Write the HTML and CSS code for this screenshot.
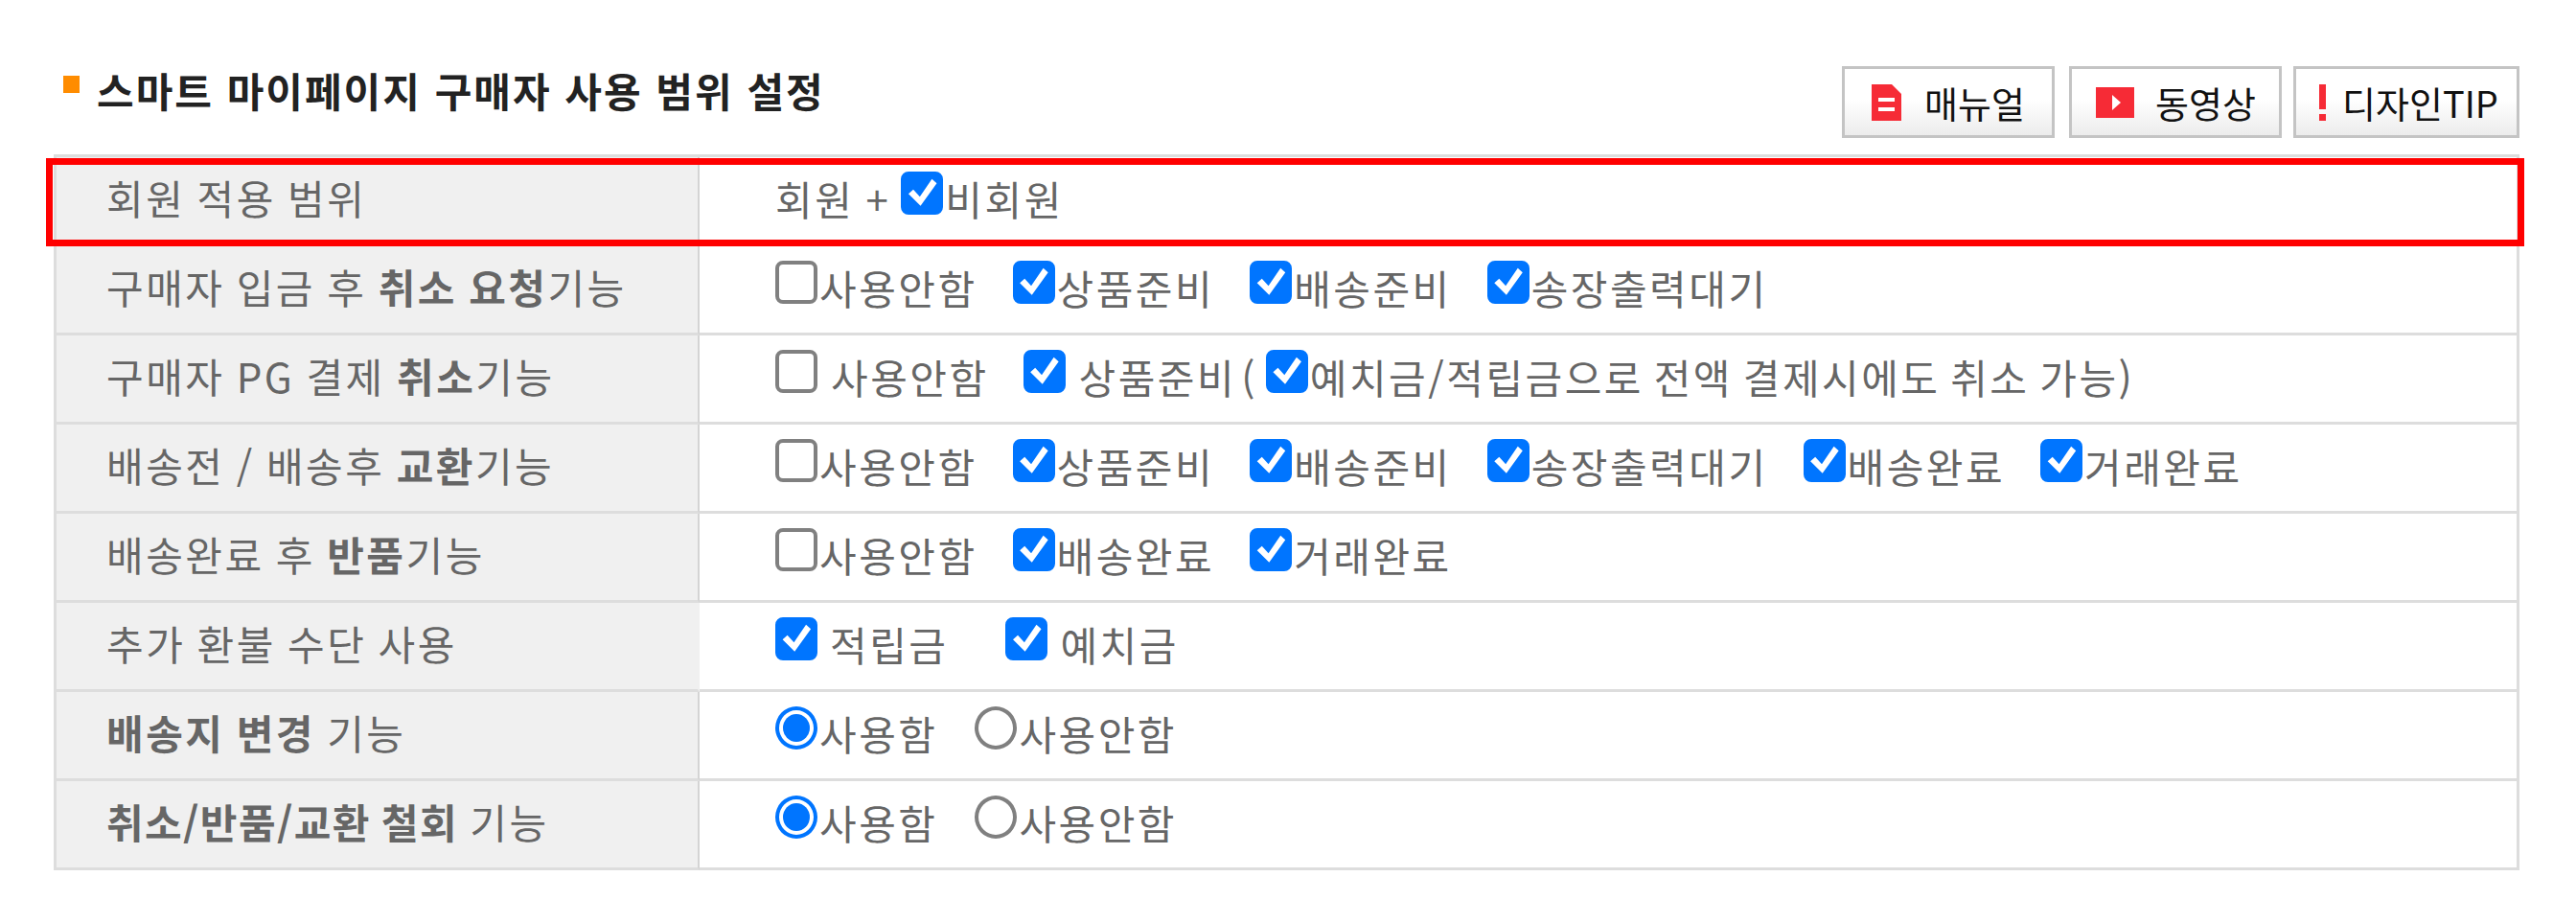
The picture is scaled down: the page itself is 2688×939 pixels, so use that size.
FILE: index.html
```html
<!DOCTYPE html>
<html lang="ko">
<head>
<meta charset="utf-8">
<title>스마트 마이페이지 구매자 사용 범위 설정</title>
<link rel="stylesheet" href="styles.css">
</head>
<body>
<header class="head">
  <h2 class="title"><span class="bullet"></span>스마트 마이페이지 구매자 사용 범위 설정</h2>
  <div class="btns">
    <a class="btn btn-manual"><svg class="ic" width="31" height="38" viewBox="0 0 31 38"><path d="M0 0H21L31 10V38H0Z" fill="#f62b36"/><rect x="7" y="14" width="17" height="4" fill="#fff"/><rect x="7" y="24" width="17" height="4" fill="#fff"/></svg>매뉴얼</a>
    <a class="btn btn-video"><svg class="ic" width="40" height="32" viewBox="0 0 40 32"><rect width="40" height="32" fill="#f62b36"/><path d="M17 8L26 16L17 24Z" fill="#fff"/></svg>동영상</a>
    <a class="btn btn-tip"><svg class="ic" width="7" height="38" viewBox="0 0 7 38"><rect width="7" height="26" fill="#f62b36"/><rect y="31" width="7" height="7" fill="#f62b36"/></svg>디자인TIP</a>
  </div>
</header>
<div class="wrap">
  <table class="tbl">
    <tbody>
      <tr>
        <th>회원 적용 범위</th>
        <td><div class="opts tight"><span class="txt plus">회원 +</span><label class="opt"><input type="checkbox" checked><span>비회원</span></label></div></td>
      </tr>
      <tr>
        <th>구매자 입금 후 <b>취소 요청</b>기능</th>
        <td><div class="opts"><label class="opt"><input type="checkbox"><span>사용안함</span></label><label class="opt"><input type="checkbox" checked><span>상품준비</span></label><label class="opt"><input type="checkbox" checked><span>배송준비</span></label><label class="opt"><input type="checkbox" checked><span>송장출력대기</span></label></div></td>
      </tr>
      <tr>
        <th>구매자 PG 결제 <b>취소</b>기능</th>
        <td><div class="opts wide"><label class="opt"><input type="checkbox"><span>사용안함</span></label><label class="opt"><input type="checkbox" checked><span>상품준비</span></label><span class="txt paren">(</span><label class="opt narrow"><input type="checkbox" checked><span>예치금/적립금으로 전액 결제시에도 취소 가능)</span></label></div></td>
      </tr>
      <tr>
        <th>배송전 / 배송후 <b>교환</b>기능</th>
        <td><div class="opts"><label class="opt"><input type="checkbox"><span>사용안함</span></label><label class="opt"><input type="checkbox" checked><span>상품준비</span></label><label class="opt"><input type="checkbox" checked><span>배송준비</span></label><label class="opt"><input type="checkbox" checked><span>송장출력대기</span></label><label class="opt"><input type="checkbox" checked><span>배송완료</span></label><label class="opt"><input type="checkbox" checked><span>거래완료</span></label></div></td>
      </tr>
      <tr>
        <th>배송완료 후 <b>반품</b>기능</th>
        <td><div class="opts"><label class="opt"><input type="checkbox"><span>사용안함</span></label><label class="opt"><input type="checkbox" checked><span>배송완료</span></label><label class="opt"><input type="checkbox" checked><span>거래완료</span></label></div></td>
      </tr>
      <tr>
        <th class="nodiv">추가 환불 수단 사용</th>
        <td><div class="opts refund"><label class="opt"><input type="checkbox" checked><span>적립금</span></label><label class="opt"><input type="checkbox" checked><span>예치금</span></label></div></td>
      </tr>
      <tr>
        <th><b>배송지 변경</b> 기능</th>
        <td><div class="opts radios"><label class="opt"><input type="radio" name="r1" checked><span>사용함</span></label><label class="opt"><input type="radio" name="r1"><span>사용안함</span></label></div></td>
      </tr>
      <tr>
        <th><b class="slashed">취소/반품/교환 철회</b> 기능</th>
        <td><div class="opts radios"><label class="opt"><input type="radio" name="r2" checked><span>사용함</span></label><label class="opt"><input type="radio" name="r2"><span>사용안함</span></label></div></td>
      </tr>
    </tbody>
  </table>
  <div class="highlight"></div>
</div>
</body>
</html>
```
FILE: styles.css
```css
* { box-sizing: border-box; }
html, body { margin: 0; padding: 0; background: #fff; }
body {
  width: 2688px;
  height: 939px;
  overflow: hidden;
  font-family: "Noto Sans CJK KR", "Noto Sans", sans-serif;
  color: #666;
}
.head {
  height: 161px;
  padding: 69px 59px 0 66px;
  display: flex;
  justify-content: space-between;
  align-items: flex-start;
}
.title {
  margin: 0;
  display: flex;
  align-items: flex-start;
  font-size: 42px;
  line-height: 50px;
  font-weight: 700;
  letter-spacing: 2px;
  color: #222;
  white-space: nowrap;
}
.bullet {
  width: 17px;
  height: 18px;
  margin: 10px 18px 0 0;
  background: #ff8c00;
}
.btns { display: flex; }
.btn {
  height: 75px;
  display: flex;
  align-items: center;
  border: 3px solid #c4c4c4;
  background: linear-gradient(#fff 45%, #ececec);
  color: #111;
  font-size: 38px;
  white-space: nowrap;
}
.btn-manual { width: 222px; padding-left: 28px; }
.btn-manual .ic { margin-right: 24px; }
.btn-video { width: 222px; margin-left: 15px; padding-left: 25px; }
.btn-video .ic { margin-right: 22px; }
.btn-tip { width: 236px; margin-left: 12px; padding-left: 24px; }
.btn-tip .ic { margin-right: 17px; }
.wrap { position: relative; margin: 0 59px 0 56px; }
.tbl {
  width: 100%;
  table-layout: fixed;
  border-collapse: separate;
  border-spacing: 0;
  border-top: 3px solid #ddd;
  border-left: 3px solid #ddd;
  border-right: 3px solid #ddd;
}
.tbl th, .tbl td {
  height: 93px;
  padding: 0;
  vertical-align: top;
  border-bottom: 3px solid #ddd;
  font-size: 42px;
  line-height: 50px;
  letter-spacing: 2.5px;
  word-spacing: -2px;
  white-space: nowrap;
}
.tbl th {
  width: 671px;
  padding: 17px 0 0 52px;
  background: #f0f0f0;
  border-right: 2px solid #d4d4d4;
  font-weight: 400;
  text-align: left;
  color: #666;
}
.tbl th.nodiv { border-right-color: #f0f0f0; }
.tbl th b { font-weight: 700; color: #666; }
.tbl th b.slashed { letter-spacing: 1.4px; }
.tbl td { padding: 15px 0 0 79px; }
.opts { display: flex; align-items: flex-start; gap: 37px; }
.opt { display: flex; align-items: flex-start; gap: 2px; }
.opt input {
  appearance: none;
  position: relative;
  width: 44px;
  height: 45px;
  margin: 0;
  flex: none;
  background: #fff;
  border: 4px solid #808080;
  border-radius: 8px;
}
.opt input[type="checkbox"]:checked {
  background: #0075ff;
  border-color: #0075ff;
}
.opt input[type="checkbox"]:checked::after {
  content: "";
  position: absolute;
  inset: 0;
  background: #fff;
  clip-path: polygon(10% 52%, 24% 40%, 43% 60%, 78% 10%, 92% 22%, 45% 86%);
}
.opt input[type="radio"] { border-radius: 50%; }
.opt input[type="radio"]:checked { border-color: #0075ff; }
.opt input[type="radio"]:checked::after {
  content: "";
  position: absolute;
  inset: 4px;
  border-radius: 50%;
  background: #0075ff;
}
.opt span, .txt { display: block; margin-top: 3px; }
.opts.tight { gap: 11px; }
.opts.wide { gap: 36px; }
.opts.wide .opt { gap: 14px; }
.opts.wide .paren { margin-left: -31px; }
.opts.wide .opt.narrow { gap: 2px; margin-left: -27px; }
.opts.wide .opt.narrow span { word-spacing: -3.5px; }
.opts.refund { gap: 60px; }
.opts.refund .opt { gap: 13px; }
.opts.radios { gap: 39px; }
.highlight {
  position: absolute;
  top: 4px;
  left: -8px;
  right: -5px;
  height: 92px;
  border: 7px solid #f00;
  pointer-events: none;
}
```
